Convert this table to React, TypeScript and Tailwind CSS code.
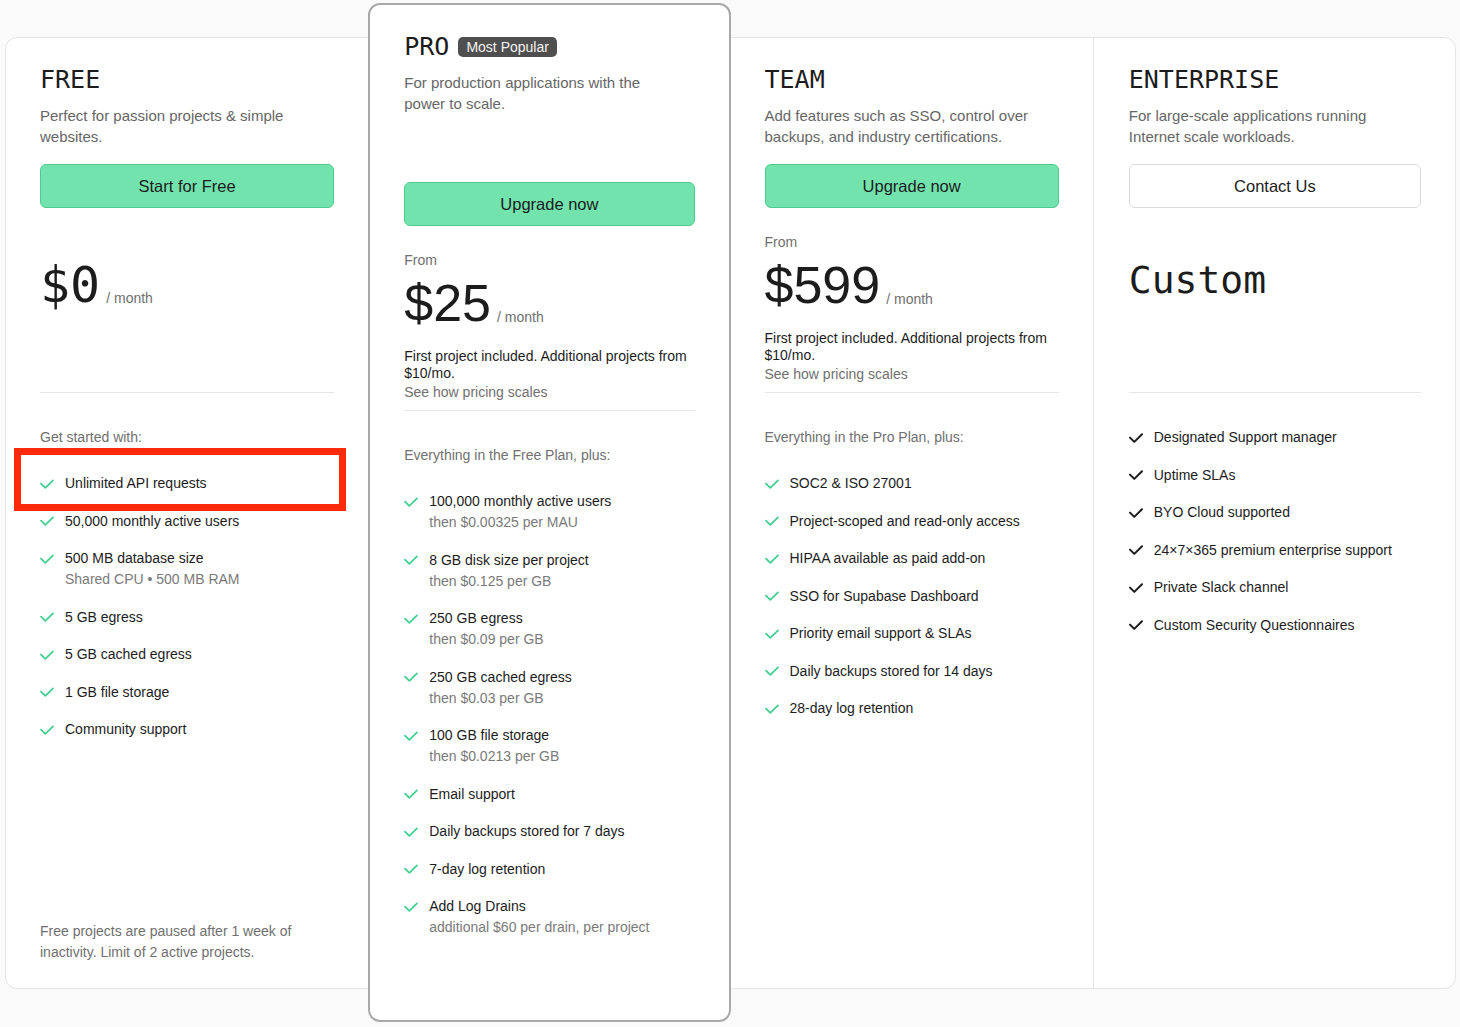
type Feature = {
    label: string;
    note?: string;
};

type Plan = {
    name: string;
    badge?: string;
    description: string[];
    cta: string;
    outline?: boolean;
    from?: boolean;
    price: string;
    mono?: boolean;
    per?: boolean;
    notes?: boolean;
    listTitle?: string;
    features: Feature[];
    footnote?: string[];
    darkCheck?: boolean;
};

const plans: Plan[] = [
    {
        name: 'FREE',
        description: ['Perfect for passion projects & simple', 'websites.'],
        cta: 'Start for Free',
        price: '$0',
        mono: true,
        per: true,
        listTitle: 'Get started with:',
        features: [
            { label: 'Unlimited API requests' },
            { label: '50,000 monthly active users' },
            { label: '500 MB database size', note: 'Shared CPU • 500 MB RAM' },
            { label: '5 GB egress' },
            { label: '5 GB cached egress' },
            { label: '1 GB file storage' },
            { label: 'Community support' },
        ],
        footnote: ['Free projects are paused after 1 week of', 'inactivity. Limit of 2 active projects.'],
    },
    {
        name: 'PRO',
        badge: 'Most Popular',
        description: ['For production applications with the', 'power to scale.'],
        cta: 'Upgrade now',
        from: true,
        price: '$25',
        per: true,
        notes: true,
        listTitle: 'Everything in the Free Plan, plus:',
        features: [
            { label: '100,000 monthly active users', note: 'then $0.00325 per MAU' },
            { label: '8 GB disk size per project', note: 'then $0.125 per GB' },
            { label: '250 GB egress', note: 'then $0.09 per GB' },
            { label: '250 GB cached egress', note: 'then $0.03 per GB' },
            { label: '100 GB file storage', note: 'then $0.0213 per GB' },
            { label: 'Email support' },
            { label: 'Daily backups stored for 7 days' },
            { label: '7-day log retention' },
            { label: 'Add Log Drains', note: 'additional $60 per drain, per project' },
        ],
    },
    {
        name: 'TEAM',
        description: ['Add features such as SSO, control over', 'backups, and industry certifications.'],
        cta: 'Upgrade now',
        from: true,
        price: '$599',
        per: true,
        notes: true,
        listTitle: 'Everything in the Pro Plan, plus:',
        features: [
            { label: 'SOC2 & ISO 27001' },
            { label: 'Project-scoped and read-only access' },
            { label: 'HIPAA available as paid add-on' },
            { label: 'SSO for Supabase Dashboard' },
            { label: 'Priority email support & SLAs' },
            { label: 'Daily backups stored for 14 days' },
            { label: '28-day log retention' },
        ],
    },
    {
        name: 'ENTERPRISE',
        description: ['For large-scale applications running', 'Internet scale workloads.'],
        cta: 'Contact Us',
        outline: true,
        price: 'Custom',
        mono: true,
        features: [
            { label: 'Designated Support manager' },
            { label: 'Uptime SLAs' },
            { label: 'BYO Cloud supported' },
            { label: '24×7×365 premium enterprise support' },
            { label: 'Private Slack channel' },
            { label: 'Custom Security Questionnaires' },
        ],
        darkCheck: true,
    },
];

const CheckIcon = ({ dark }: { dark?: boolean }) => (
    <svg width="14" height="10" viewBox="0 0 14 10" fill="none" className="shrink-0">
        <path
            d="M1 4.6 5.3 8.9 13 1.3"
            stroke={dark ? '#1c1c1c' : '#3ecf8e'}
            strokeWidth={dark ? 2 : 1.7}
            strokeLinecap="round"
            strokeLinejoin="round"
        />
    </svg>
);

const PlanColumn = ({ plan, featured, divider }: { plan: Plan; featured?: boolean; divider?: boolean }) => {
    const isCustom = plan.price === 'Custom';

    return (
        <div
            className={
                featured
                    ? 'relative z-10 -mt-[35px] -mb-[34px] flex flex-col rounded-[12px] border-2 border-[#a9a9a9] bg-white px-[34px] pb-[25px]'
                    : `flex flex-col px-[34px] pb-[25px] ${divider ? 'border-l border-[#e6e6e6] pl-[35px]' : ''}`
            }
        >
            {/* Header */}
            <div className={featured ? 'h-[177px] pt-[27px]' : 'h-[126px] pt-[27px]'}>
                <div className="flex items-center gap-[9px]">
                    <h2 className="font-['DejaVu_Sans_Mono',monospace] text-[25px] leading-[30px] text-[#1c1c1c]">
                        {plan.name}
                    </h2>
                    {plan.badge && (
                        <span className="rounded-[5px] bg-[#4f4f4f] px-[8px] text-[14px] leading-[20px] text-[#f2f2f2]">
                            {plan.badge}
                        </span>
                    )}
                </div>
                <p className="mt-[10px] text-[15px] leading-[21px] text-[#666666]">
                    {plan.description[0]}
                    <br />
                    {plan.description[1]}
                </p>
            </div>

            <button
                type="button"
                className={`h-[44px] w-full rounded-[6px] border text-[16.5px] text-[#1c1c1c] ${
                    plan.outline ? 'border-[#dadada] bg-white' : 'border-[#4fcb8d] bg-[#72e3ad]'
                }`}
            >
                {plan.cta}
            </button>

            {/* Price */}
            <div className="h-[185px] border-b border-[#e6e6e6] pt-[24px]">
                <p className={`text-[14px] leading-[20px] text-[#707070] ${plan.from ? '' : 'invisible'}`}>From</p>
                <div className="mt-[5px] flex items-baseline gap-[6px]">
                    <span
                        className={
                            plan.mono
                                ? `font-['DejaVu_Sans_Mono',monospace] text-[#1c1c1c] ${
                                      isCustom ? 'text-[38px] leading-[46px]' : 'text-[50px] leading-[56px]'
                                  }`
                                : 'text-[52px] leading-[56px] text-[#1c1c1c]'
                        }
                    >
                        {plan.price}
                    </span>
                    {plan.per && <span className="relative top-[1px] text-[14px] text-[#707070]">/ month</span>}
                </div>
                {plan.notes && (
                    <>
                        <p className="mt-[17px] text-[14px] leading-[17px] text-[#1c1c1c]">
                            First project included. Additional projects from
                            <br />
                            $10/mo.
                        </p>
                        <p className="mt-[2px] text-[14px] leading-[17px] text-[#707070]">See how pricing scales</p>
                    </>
                )}
            </div>

            {/* Features */}
            <div className="pt-[34px]">
                {plan.listTitle && <p className="text-[14px] leading-[21px] text-[#707070]">{plan.listTitle}</p>}
                <ul className={`flex flex-col gap-[16.5px] ${plan.listTitle ? 'mt-[25px]' : ''}`}>
                    {plan.features.map((feature) => (
                        <li key={feature.label} className="flex items-start gap-[11px]">
                            <span className="flex h-[21px] items-center">
                                <CheckIcon dark={plan.darkCheck} />
                            </span>
                            <div className="text-[14px] leading-[21px]">
                                <p className="text-[#1c1c1c]">{feature.label}</p>
                                {feature.note && <p className="text-[#7a7a7a]">{feature.note}</p>}
                            </div>
                        </li>
                    ))}
                </ul>
            </div>

            {plan.footnote && (
                <p className="mt-auto text-[14px] leading-[21px] text-[#707070]">
                    {plan.footnote[0]}
                    <br />
                    {plan.footnote[1]}
                </p>
            )}
        </div>
    );
};

export default function App() {
    return (
        <div className="relative min-h-[1027px] bg-[#fafafa] pt-[37px] font-['Liberation_Sans',Arial,sans-serif]">
            <div className="ml-[5px] grid h-[952px] w-[1451px] grid-cols-4 rounded-[12px] border border-[#e4e4e4] bg-white">
                <PlanColumn plan={plans[0]} />
                <PlanColumn plan={plans[1]} featured />
                <PlanColumn plan={plans[2]} />
                <PlanColumn plan={plans[3]} divider />
            </div>

            {/* Highlight annotation */}
            <div className="absolute left-[14px] top-[448px] h-[63px] w-[332px] border-[7px] border-[#ff2a0a]" />
        </div>
    );
}
